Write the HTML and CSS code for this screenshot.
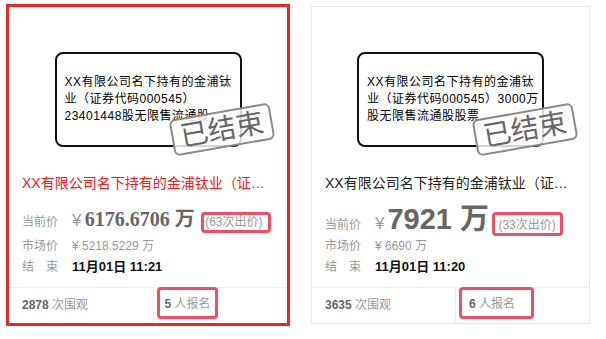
FILE: index.html
```html
<!DOCTYPE html>
<html lang="zh-CN">
<head>
<meta charset="utf-8">
<title>拍卖列表</title>
<link rel="stylesheet" href="styles.css">
</head>
<body>
<div class="page">
  <div class="card card--active">
    <div class="thumb">
      <div class="poster">
        <p>XX有限公司名下持有的金浦钛</p>
        <p>业（证券代码000545）</p>
        <p>23401448股无限售流通股</p>
      </div>
      <div class="stamp">已结束</div>
    </div>
    <div class="title title--red">XX有限公司名下持有的金浦钛业（证券代码000545）23401448股无限售流通股</div>
    <div class="info">
      <div class="row row--price"><span class="label">当前价</span><span class="yen">¥</span> <span class="price price--serif">6176.6706 万</span> <span class="mark mark--bids">(63次出价)</span></div>
      <div class="row row--market"><span class="label">市场价</span>¥ 5218.5229 万</div>
      <div class="row row--end"><span class="label label--spread"><span>结</span><span>束</span></span><span class="time">11月01日 11:21</span></div>
    </div>
    <div class="foot">
      <div class="half half--views"><b>2878</b>&nbsp;次围观</div>
      <div class="half half--signup"><span class="mark mark--signup"><b>5</b>&nbsp;人报名</span></div>
    </div>
  </div>

  <div class="card">
    <div class="thumb">
      <div class="poster">
        <p>XX有限公司名下持有的金浦钛</p>
        <p>业（证券代码000545）3000万</p>
        <p>股无限售流通股股票</p>
      </div>
      <div class="stamp">已结束</div>
    </div>
    <div class="title">XX有限公司名下持有的金浦钛业（证券代码000545）3000万股无限售流通股股票</div>
    <div class="info">
      <div class="row row--price"><span class="label">当前价</span><span class="yen">¥</span><span class="price price--big">7921 万</span> <span class="mark mark--bids mark--bids2">(33次出价)</span></div>
      <div class="row row--market"><span class="label">市场价</span>¥ 6690 万</div>
      <div class="row row--end"><span class="label label--spread"><span>结</span><span>束</span></span><span class="time">11月01日 11:20</span></div>
    </div>
    <div class="foot">
      <div class="half half--views"><b>3635</b>&nbsp;次围观</div>
      <div class="half half--signup"><span class="mark mark--signup mark--wide"><b>6</b>&nbsp;人报名</span></div>
    </div>
  </div>
</div>
</body>
</html>
```

FILE: styles.css
```css
* { box-sizing: border-box; }
body {
  margin: 0;
  background: #fff;
  font-family: "Liberation Sans", "Noto Sans CJK SC", sans-serif;
  color: #999;
}
.page {
  display: flex;
  align-items: flex-start;
  gap: 21px;
  padding: 4px 0 0 6px;
}
.card {
  width: 279px;
  height: 318px;
  margin-top: 2px;
  border: 1px solid #e6e6e6;
  background: #fff;
  display: flex;
  flex-direction: column;
}
.card--active {
  width: 284px;
  height: 322px;
  margin-top: 0;
  border: 3px solid #e42a2a;
}
.thumb {
  position: relative;
  height: 163px;
  flex: none;
  display: flex;
  justify-content: center;
  padding-top: 45px;
}
.poster {
  width: 187px;
  height: 95px;
  border: 2px solid #111;
  border-radius: 8px;
  display: flex;
  flex-direction: column;
  justify-content: center;
  padding-left: 8px;
  overflow: hidden;
  white-space: nowrap;
  color: #000;
  font-size: 12px;
  letter-spacing: 0.5px;
  line-height: 17px;
}
.poster p { margin: 0; }
.stamp {
  position: absolute;
  left: 162px;
  top: 104px;
  width: 102px;
  height: 37px;
  border: 2px solid #8a8a8a;
  border-radius: 6px;
  background: rgba(255, 255, 255, 0.82);
  transform: rotate(-10deg);
  color: #666;
  font-size: 28px;
  line-height: 33px;
  text-align: center;
}
.title {
  flex: none;
  height: 26px;
  line-height: 26px;
  padding: 0 13px;
  font-size: 14px;
  color: #222;
  white-space: nowrap;
  overflow: hidden;
  text-overflow: ellipsis;
}
.title--red { color: #e8201c; }
.info {
  flex: none;
  padding: 8px 13px 0;
  font-size: 12px;
  color: #999;
}
.row { white-space: nowrap; }
.label {
  display: inline-block;
  width: 50px;
}
.label--spread {
  display: inline-flex;
  width: 36px;
  margin-right: 14px;
  justify-content: space-between;
}
.row--price {
  height: 32px;
  line-height: 30px;
}
.row--market {
  height: 20px;
  line-height: 20px;
}
.row--end {
  height: 22px;
  line-height: 22px;
}
.yen {
  font-size: 17px;
  color: #999;
}
.price {
  color: #666;
  font-weight: bold;
}
.price--serif {
  font-family: "Liberation Serif", "Noto Sans CJK SC", serif;
  font-size: 20px;
}
.price--big {
  font-size: 29px;
  margin-left: 3px;
}
.time {
  color: #111;
  font-weight: bold;
  font-size: 13px;
}
.mark {
  display: inline-block;
  border: 3px solid #ee4f66;
  border-radius: 4px;
}
.mark--bids {
  line-height: 15px;
  padding: 0 5px 0 1px;
  margin-left: 3px;
  color: #999;
}
.mark--bids2 {
  margin-left: 0;
  padding: 3px 4px 0 3px;
}
.foot {
  margin-top: auto;
  flex: none;
  height: 36px;
  border-top: 1px solid #eee;
  display: flex;
  font-size: 12px;
  color: #999;
}
.foot b { color: #666; }
.half {
  flex: 1;
  display: flex;
  align-items: flex-start;
}
.half--views {
  padding-left: 13px;
  line-height: 34px;
}
.half--signup {
  border-left: 1px solid #eee;
  padding-left: 3px;
}
.mark--signup {
  height: 32px;
  margin-top: -1px;
  line-height: 28px;
  padding: 0 4px 0 5px;
}
.mark--wide {
  padding: 0 16px 0 7px;
}
```
